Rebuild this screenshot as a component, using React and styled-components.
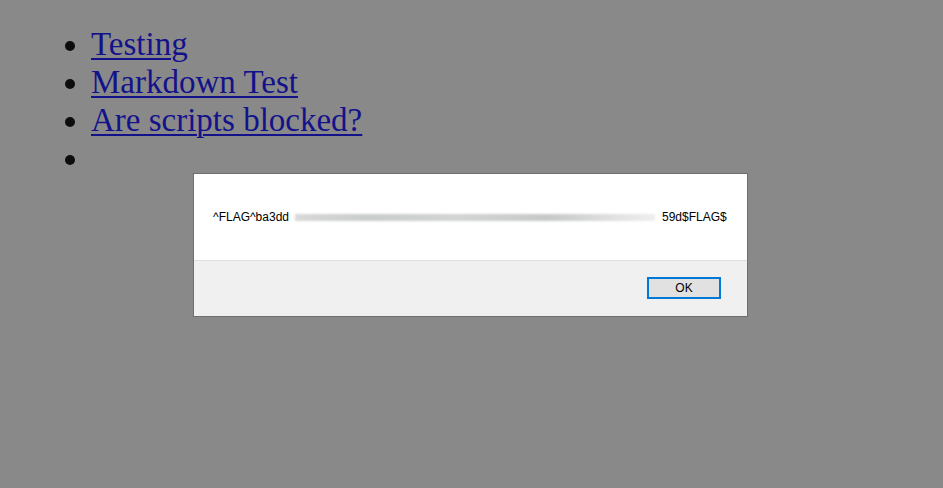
import React from "react";
import styled, { createGlobalStyle } from "styled-components";

const GlobalStyle = createGlobalStyle`
  html, body {
    margin: 0;
    padding: 0;
    background: #898989;
    height: 100%;
  }
  body {
    font-family: "Liberation Serif", "Times New Roman", serif;
  }
`;

const Page = styled.div`
  position: relative;
  width: 943px;
  height: 488px;
  overflow: hidden;
`;

const LinkList = styled.ul`
  margin: 0;
  padding: 25px 0 0 91px;
  list-style: disc;
  font-size: 33px;
  line-height: 38px;
  color: #0d0d0d;
`;

const Item = styled.li`
  height: 38px;
`;

const Link = styled.a`
  color: #14128a;
  text-decoration: underline;
  text-decoration-thickness: 2px;
  text-underline-offset: 3px;
`;

const Dialog = styled.div`
  position: absolute;
  left: 193px;
  top: 173px;
  width: 553px;
  border: 1px solid #6f6f6f;
  background: #ffffff;
  font-family: "Liberation Sans", Arial, sans-serif;
  font-size: 12px;
  color: #000;
`;

const Body = styled.div`
  height: 86px;
  display: flex;
  align-items: center;
  padding: 0 0 0 19px;
  border-bottom: 1px solid #dfdfdf;
`;

const Message = styled.div`
  display: flex;
  align-items: center;
  white-space: nowrap;
`;

const Redacted = styled.span`
  display: inline-block;
  width: ${(p) => p.width}px;
  height: 7px;
  margin: 0 7px 0 6px;
  background: linear-gradient(
    90deg,
    #d8d9d8 0%,
    #c9cdcb 20%,
    #d2d5d3 45%,
    #c6c9c7 70%,
    #e2e3e2 90%,
    #eeeeee 100%
  );
  filter: blur(0.8px);
`;

const Footer = styled.div`
  height: 55px;
  background: #f0f0f0;
  display: flex;
  align-items: center;
  justify-content: flex-end;
  padding-right: 26px;
`;

const OkButton = styled.button`
  width: 74px;
  height: 22px;
  margin-top: -1px;
  border: 2px solid #0078d7;
  background: #e1e1e1;
  font-family: "Liberation Sans", Arial, sans-serif;
  font-size: 12px;
  color: #000;
  padding: 0;
`;

export default function App() {
  return (
    <>
      <GlobalStyle />
      <Page>
        <LinkList>
          <Item><Link href="#">Testing</Link></Item>
          <Item><Link href="#">Markdown Test</Link></Item>
          <Item><Link href="#">Are scripts blocked?</Link></Item>
          <Item></Item>
        </LinkList>
        <Dialog>
          <Body>
            <Message>
              <span>^FLAG^ba3dd</span>
              <Redacted width={360} />
              <span>59d$FLAG$</span>
            </Message>
          </Body>
          <Footer>
            <OkButton>OK</OkButton>
          </Footer>
        </Dialog>
      </Page>
    </>
  );
}
